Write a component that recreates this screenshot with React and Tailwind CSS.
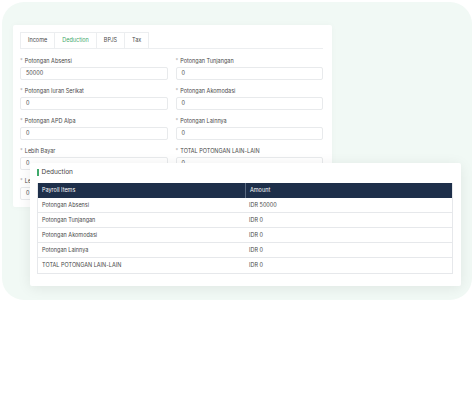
import React from 'react';

const tabs = ['Income', 'Deduction', 'BPJS', 'Tax'];

const fields = [
  ['Potongan Absensi', '50000'],
  ['Potongan Tunjangan', '0'],
  ['Potongan Iuran Serikat', '0'],
  ['Potongan Akomodasi', '0'],
  ['Potongan APD Alpa', '0'],
  ['Potongan Lainnya', '0'],
  ['Lebih Bayar', '0'],
  ['TOTAL POTONGAN LAIN-LAIN', '0'],
  ['Lebih Potong', '0'],
];

const rows = [
  ['Potongan Absensi', 'IDR 50000'],
  ['Potongan Tunjangan', 'IDR 0'],
  ['Potongan Akomodasi', 'IDR 0'],
  ['Potongan Lainnya', 'IDR 0'],
  ['TOTAL POTONGAN LAIN-LAIN', 'IDR 0'],
];

function Field({ label, value }) {
  return (
    <div className="flex flex-col">
      <label className="flex items-center gap-[2px] h-[8px] text-[5.5px] leading-[8px] text-[#484848]">
        <span className="text-[#aaa]">*</span>
        {label}
      </label>
      <div className="mt-[2px] h-[13px] rounded-[2px] border border-[#e8eaec] bg-white px-[5px] flex items-center text-[5.5px] text-[#484848]">
        {value}
      </div>
    </div>
  );
}

export default function App() {
  return (
    <div className="w-[474px] h-[418px] bg-white p-[2px]" style={{ fontFamily: 'Inter, "Noto Sans", sans-serif' }}>
      <div className="relative w-[470px] h-[298px] rounded-[22px] bg-[#f1f9f5] pt-[23px] pl-[11px]">
        {/* Form card */}
        <div className="w-[319px] h-[182px] overflow-hidden bg-white rounded-[2px] shadow-[0_0_6px_rgba(0,0,0,0.03)] pl-[7px] pr-[9px] pt-[7px]">
          <div className="flex border-b border-[#eceef0]">
            {tabs.map((t) => (
              <div
                key={t}
                className={
                  t === 'Deduction'
                    ? 'h-[16px] px-[7px] flex items-center text-[5.5px] text-[#3fa96b] border border-b-0 border-l-0 border-[#eceef0] bg-white -mb-px'
                    : 'h-[16px] px-[7px] flex items-center text-[5.5px] text-[#484848] border border-l-0 first:border-l border-b-0 border-[#eceef0] bg-white'
                }
              >
                {t}
              </div>
            ))}
          </div>
          <div className="grid grid-cols-2 gap-x-[8px] gap-y-[7px] mt-[8px]">
            {fields.map(([l, v]) => (
              <Field key={l} label={l} value={v} />
            ))}
          </div>
        </div>

        {/* Summary table card */}
        <div className="absolute left-[28px] top-[161px] w-[431px] h-[123px] bg-white rounded-[2px] shadow-[0_2px_14px_rgba(0,0,0,0.08)] pl-[7px] pr-[8px] pt-[5px]">
          <div className="flex items-center h-[9px] gap-[3px]">
            <span className="w-[1.5px] h-[7px] bg-[#3fa96b]" />
            <span className="text-[6.5px] text-[#444]">Deduction</span>
          </div>
          <div className="mt-[6px] border-x border-b border-[#e6e8eb]">
            <div className="grid grid-cols-2 h-[15px] bg-[#1e2f4a] text-white text-[5.5px]">
              <div className="flex items-center px-[4px]">Payroll Items</div>
              <div className="flex items-center px-[4px] border-l border-[#5b6b82]">Amount</div>
            </div>
            {rows.map(([a, b], i) => (
              <div
                key={a}
                className={
                  i === rows.length - 1
                    ? 'grid grid-cols-2 h-[15px] text-[5.5px] text-[#484848]'
                    : 'grid grid-cols-2 h-[15px] text-[5.5px] text-[#484848] border-b border-[#e6e8eb]'
                }
              >
                <div className="flex items-center px-[4px]">{a}</div>
                <div className="flex items-center px-[4px]">{b}</div>
              </div>
            ))}
          </div>
        </div>
      </div>
    </div>
  );
}
